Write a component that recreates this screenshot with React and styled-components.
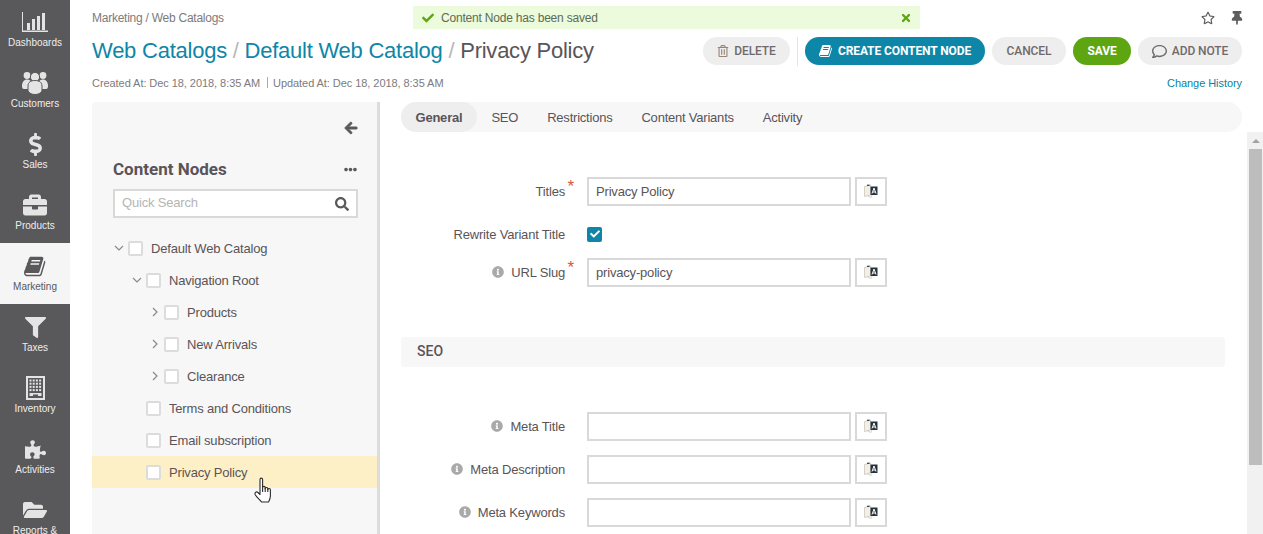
import React from "react";
import styled, { createGlobalStyle } from "styled-components";
import {
  FaDollarSign,
  FaBriefcase,
  FaFilter,
  FaPuzzlePiece,
  FaFolderOpen,
  FaCheck,
  FaTimes,
  FaRegStar,
  FaThumbtack,
  FaRegTrashAlt,
  FaRegComment,
  FaArrowLeft,
  FaEllipsisH,
  FaSearch,
  FaInfoCircle,
} from "react-icons/fa";

const GlobalStyle = createGlobalStyle`
  html, body {
    margin: 0;
    height: 534px;
    overflow: hidden;
    background: #fff;
  }
  body {
    font-family: "Liberation Sans", Arial, sans-serif;
    font-size: 13px;
    letter-spacing: -0.18px;
    color: #5a5458;
  }
  * { box-sizing: border-box; }
`;

const Page = styled.div`
  display: flex;
  height: 534px;
  width: 1263px;
  overflow: hidden;
`;

const Sidebar = styled.nav`
  width: 70px;
  flex: none;
  background: #59585a;
  overflow: hidden;
  padding-bottom: 1px;
`;

const NavList = styled.div`
  margin-top: -1px;
`;

const NavItem = styled.div`
  height: 61px;
  display: flex;
  flex-direction: column;
  align-items: center;
  padding-top: 11px;
  background: ${(p) => (p.$active ? "#f5f5f5" : "transparent")};
  color: ${(p) => (p.$active ? "#59585a" : "#eee")};
  font-size: 10px;
  letter-spacing: 0;
  line-height: 13px;
  white-space: nowrap;
  svg { display: block; }
`;

const NavIcon = styled.div`
  height: 24px;
  display: flex;
  align-items: center;
  justify-content: center;
  margin-bottom: 2px;
  color: ${(p) => (p.$active ? "#59585a" : "#e4e4e4")};
  font-size: ${(p) => p.$size || 22}px;
`;

const Main = styled.div`
  flex: 1;
  min-width: 0;
  padding: 0 21px 0 22px;
  position: relative;
`;

const TopRow = styled.div`
  height: 36px;
  display: flex;
  align-items: center;
  justify-content: space-between;
  font-size: 12px;
  letter-spacing: -0.25px;
  color: #7e7a7c;
`;

const Toast = styled.div`
  position: absolute;
  left: 343px;
  top: 6px;
  width: 507px;
  height: 23px;
  background: #ebfbdb;
  display: flex;
  align-items: center;
  padding: 0 8px 0 9px;
  color: #5f6a55;
  font-size: 12px;
  letter-spacing: -0.2px;
  gap: 7px;
`;

const ToastClose = styled.span`
  margin-left: auto;
  color: #5ea512;
  font-size: 12px;
  display: flex;
`;

const TopIcons = styled.div`
  display: flex;
  gap: 15px;
  align-items: center;
  font-size: 14px;
  color: #5f5c5e;
  margin-right: -2px;
`;

const TitleRow = styled.div`
  height: 30px;
  display: flex;
  align-items: center;
  justify-content: space-between;
`;

const Title = styled.h1`
  margin: 0;
  font-size: 22px;
  letter-spacing: -0.24px;
  font-weight: 400;
  color: #5a5458;
  white-space: nowrap;
`;

const TitleLink = styled.span`
  color: #0d86a8;
`;

const Slash = styled.span`
  color: #b8b8b8;
`;

const Actions = styled.div`
  display: flex;
  align-items: center;
  gap: 7px;
`;

const Btn = styled.button`
  height: 28px;
  width: ${(p) => p.$w}px;
  border: 0;
  border-radius: 14px;
  padding: 0;
  background: ${(p) => p.$bg || "#eee"};
  color: ${(p) => p.$color || "#6e6a6c"};
  font-family: Roboto, sans-serif;
  font-weight: ${(p) => p.$weight || 500};
  font-size: 12px;
  letter-spacing: -0.1px;
  display: flex;
  align-items: center;
  justify-content: center;
  gap: 5px;
  white-space: nowrap;
`;

const Divider = styled.div`
  width: 1px;
  height: 29px;
  background: #e4e4e4;
`;

const MetaRow = styled.div`
  height: 19px;
  margin-top: 7px;
  display: flex;
  align-items: center;
  justify-content: space-between;
  font-size: 11px;
  letter-spacing: -0.06px;
  color: #7e7a7c;
`;

const MetaSep = styled.span`
  display: inline-block;
  width: 1px;
  height: 11px;
  background: #aaa;
  margin: 0 5px 0 7px;
  vertical-align: -1px;
`;

const ChangeLink = styled.span`
  color: #0d7fa0;
`;

const Columns = styled.div`
  display: flex;
  margin-top: 10px;
`;

const TreePanel = styled.aside`
  width: 288px;
  height: 432px;
  flex: none;
  background: #f7f7f7;
  border-right: 3px solid #dcdcdc;
  border-radius: 4px 0 0 0;
`;

const Collapse = styled.div`
  height: 51px;
  display: flex;
  justify-content: flex-end;
  align-items: center;
  padding: 0 19px 0 0;
  font-size: 14px;
  color: #59585a;
  svg { stroke: currentColor; stroke-width: 30px; }
`;

const PanelHead = styled.div`
  margin-top: 5px;
  padding: 0 20px 0 21px;
  height: 22px;
  display: flex;
  align-items: center;
  justify-content: space-between;
`;

const PanelTitle = styled.h2`
  margin: 0;
  font-family: Roboto, sans-serif;
  font-size: 17px;
  letter-spacing: 0;
  font-weight: 700;
  color: #5a5458;
`;

const More = styled.span`
  display: flex;
  font-size: 13px;
  color: #59585a;
`;

const SearchBox = styled.div`
  margin: 9px 21px 0;
  height: 29px;
  width: 245px;
  border: 2px solid #d9d9d9;
  background: #fff;
  display: flex;
  align-items: center;
  justify-content: space-between;
  padding: 0 7px 2px 7px;
  color: #b5b5b5;
  svg { color: #59585a; font-size: 14px; margin-top: 2px; }
`;

const Tree = styled.div`
  margin-top: 14px;
`;

const TreeRow = styled.div`
  height: 32px;
  display: flex;
  align-items: center;
  padding-left: ${(p) => p.$indent}px;
  background: ${(p) => (p.$selected ? "#fef0c6" : "transparent")};
  color: #5a5458;
`;

const Caret = styled.span`
  width: 14px;
  flex: none;
  display: flex;
  svg { transform: rotate(${(p) => (p.$open ? 90 : 0)}deg); }
`;

const Check = styled.span`
  width: 15px;
  height: 15px;
  flex: none;
  border: 2px solid #dcdcdc;
  border-radius: 2px;
  background: #fff;
  margin-right: 8px;
`;

const Pointer = styled.span`
  position: absolute;
  left: 184px;
  top: 477px;
  display: flex;
`;

const Content = styled.section`
  flex: 1;
  min-width: 0;
  margin-left: 21px;
  position: relative;
`;

const Tabs = styled.div`
  height: 30px;
  display: flex;
  align-items: center;
  background: #f7f7f7;
  border-radius: 15px;
`;

const Tab = styled.div`
  height: 30px;
  display: flex;
  align-items: center;
  padding: 0 14.5px;
  border-radius: 15px;
  background: ${(p) => (p.$active ? "#eee" : "transparent")};
  font-weight: ${(p) => (p.$active ? 700 : 400)};
  letter-spacing: -0.22px;
  color: #5a5458;
`;

const FormBody = styled.div`
  width: 824px;
  padding-top: 44px;
`;

const Field = styled.div`
  display: flex;
  align-items: center;
  height: 30px;
  margin-bottom: ${(p) => p.$gap ?? 13}px;
`;

const Label = styled.label`
  width: 164px;
  flex: none;
  display: flex;
  align-items: center;
  justify-content: flex-end;
  gap: 7px;
  color: #5a5458;
  position: relative;
`;

const Info = styled.span`
  display: flex;
  font-size: 12px;
  color: #a9a9a9;
`;

const Required = styled.span`
  position: absolute;
  right: -9px;
  top: -6px;
  color: #d8583c;
  font-size: 17px;
  line-height: 17px;
`;

const Input = styled.div`
  margin-left: 22px;
  width: 264px;
  height: 29px;
  border: 2px solid #d9d9d9;
  background: #fff;
  padding: 0 7px;
  display: flex;
  align-items: center;
  color: #5a5458;
`;

const TranslateBtn = styled.div`
  margin-left: 4px;
  width: 32px;
  height: 29px;
  border: 2px solid #d9d9d9;
  background: #fff;
  display: flex;
  align-items: center;
  justify-content: center;
`;

const Tick = styled.span`
  margin-left: 22px;
  width: 15px;
  height: 15px;
  border-radius: 2px;
  background: #0d86a8;
  color: #fff;
  display: flex;
  align-items: center;
  justify-content: center;
  font-size: 10px;
`;

const SectionHead = styled.div`
  height: 30px;
  margin: 50px 0 44px;
  background: #f7f7f7;
  border-radius: 3px;
  display: flex;
  align-items: center;
  padding: 0 0 2px 16px;
  font-family: Roboto, sans-serif;
  font-weight: 500;
  font-size: 14px;
  letter-spacing: 0;
  color: #5a5458;
`;

const ScrollTrack = styled.div`
  position: absolute;
  right: -21px;
  top: 30px;
  width: 16px;
  height: 402px;
  background: #f1f1f1;
  display: flex;
  flex-direction: column;
  padding-left: 2px;
`;

const ScrollArrow = styled.div`
  height: 17px;
  width: 13px;
  display: flex;
  align-items: center;
  justify-content: center;
  &::before {
    content: "";
    border-left: 4px solid transparent;
    border-right: 4px solid transparent;
    border-bottom: 4px solid #a3a3a3;
  }
`;

const ScrollThumb = styled.div`
  width: 13px;
  height: 316px;
  background: #bdbdbd;
`;

const BOOK_PATH =
  "M1639 478q40 57 18 129l-275 906q-19 64-76.5 107.5t-122.5 43.5h-923q-77 0-148.5-53.5t-99.5-131.5q-24-67-2-127 0-4 3-27t4-37q1-8-3-21.5t-3-19.5q2-11 8-21t16.5-23.5 16.5-23.5q23-38 45-91.5t30-91.5q3-10 .5-30t-.5-28q3-11 17-28t17-23q21-36 42-92t25-90q1-9-2.5-32t.5-28q4-13 22-30.5t22-22.5q19-26 42.5-84.5t27.5-96.5q1-8-3-25.5t-2-26.5q2-8 9-18t18-23 17-21q8-12 16.5-30.5t15-35 16-36 19.5-32 26.5-23.5 36-11.5 47.5 5.5l-1 3q38-9 51-9h761q74 0 114 56t18 130l-274 906q-36 119-71.5 153.5t-128.5 34.5h-869q-27 0-38 15-11 16-1 43 24 70 144 70h923q29 0 56-15.5t35-41.5l300-987q7-22 5-57 38 15 59 43zm-1064 2q-4 13 2 22.5t20 9.5h608q13 0 25.5-9.5t16.5-22.5l21-64q4-13-2-22.5t-20-9.5h-608q-13 0-25.5 9.5t-16.5 22.5zm-83 256q-4 13 2 22.5t20 9.5h608q13 0 25.5-9.5t16.5-22.5l21-64q4-13-2-22.5t-20-9.5h-608q-13 0-25.5 9.5t-16.5 22.5z";

const BookIcon = ({ size }) => (
  <svg width={size} height={size} viewBox="0 0 1792 1792" fill="currentColor">
    <path d={BOOK_PATH} />
  </svg>
);

const DashboardsIcon = () => (
  <svg width="26" height="20" viewBox="0 0 26 20" fill="#e4e4e4">
    <path d="M0 0h1v18.6h25V20H0z" />
    <rect x="5" y="11" width="3" height="7" />
    <rect x="10" y="7" width="3" height="11" />
    <rect x="15" y="4" width="3" height="14" />
    <rect x="20" y="1" width="3" height="17" />
  </svg>
);

const UsersIcon = () => (
  <svg width="26" height="24" viewBox="0 0 26 24" fill="#e4e4e4">
    <circle cx="5" cy="4.5" r="3.4" />
    <circle cx="21" cy="4.5" r="3.4" />
    <path d="M0 15c0-4 2-6.500 5-6.500 3 0 5 2 5 6.500v3H2c-1.500 0-2-1-2-3z" />
    <path d="M26 15c0-4-2-6.500-5-6.500-3 0-5 2-5 6.500v3h8c1.500 0 2-1 2-3z" />
    <circle cx="13" cy="6" r="4.600" stroke="#59585a" strokeWidth="1" />
    <path
      d="M6 20v-5c0-3.500 2.500-5.500 7-5.500s7 2 7 5.500v5c-1.500 2.500-4 3.500-7 3.500s-5.500-1-7-3.500z"
      stroke="#59585a"
      strokeWidth="1"
    />
  </svg>
);

const BuildingIcon = () => {
  const windows = [];
  for (let row = 0; row < 4; row++) {
    for (let col = 0; col < 4; col++) {
      windows.push(<rect key={`${row}-${col}`} x={3.5 + col * 3.2} y={3.5 + row * 3.2} width="2" height="2" />);
    }
  }
  return (
    <svg width="19" height="24" viewBox="0 0 19 24" fill="#e4e4e4">
      <path fillRule="evenodd" d="M0 0h19v24H0zM2 2v20h15V2z" />
      {windows}
      <path d="M3.500 17h12v3h-3.500v-1.500h-5V20H3.500z" />
    </svg>
  );
};

const TranslateIcon = () => (
  <svg width="14" height="14" viewBox="0 0 14 14">
    <path d="M.5 2.500 6.500 1v10l-6 1.500z" fill="#f3efe6" stroke="#c4c0b6" strokeWidth="0.7" />
    <path d="M3.500 12l3.500 1.500 1-2.500" fill="none" stroke="#c4c0b6" strokeWidth="0.7" />
    <path d="M3 .8l2.500-.3v1.400H3z" fill="#3b4a55" />
    <path d="M6.500 2.500h7v8.500h-7z" fill="#26323c" />
    <path d="M8 9.500 10 4l2 5.500M8.800 8h2.400" fill="none" stroke="#fff" strokeWidth="1" />
  </svg>
);

const CaretIcon = () => (
  <svg width="10" height="10" viewBox="0 0 10 10" fill="none" stroke="#8a8a8a" strokeWidth="1.2">
    <path d="M3 1l4 4-4 4" />
  </svg>
);

const HandIcon = () => (
  <svg width="19" height="26" viewBox="0 0 19 26" fill="#fff" stroke="#2b2b2b" strokeWidth="1.1" strokeLinejoin="round">
    <path d="M6 15.500V2.500C6 .6 8.600 .6 8.600 2.500V10.500C8.600 9 11.200 9 11.200 10.500V11.500C11.200 10.200 13.800 10.200 13.800 11.700V12.500C13.800 11.200 16.400 11.200 16.400 12.800V19C16.400 21.500 15.500 23 14.500 25H7.500C6.500 23 3.500 21.200 1.400 18C.2 16 2.200 14 4 15.500L6 17.500Z" />
    <path d="M8.600 10.500V15M11.200 11V15M13.800 12V15" fill="none" />
  </svg>
);

const navItems = [
  { label: "Dashboards", icon: <DashboardsIcon /> },
  { label: "Customers", icon: <UsersIcon /> },
  { label: "Sales", icon: <FaDollarSign />, size: 23 },
  { label: "Products", icon: <FaBriefcase />, size: 24 },
  { label: "Marketing", icon: <BookIcon size={23} />, active: true },
  { label: "Taxes", icon: <FaFilter />, size: 21 },
  { label: "Inventory", icon: <BuildingIcon /> },
  { label: "Activities", icon: <FaPuzzlePiece />, size: 21 },
  { label: "Reports &", icon: <FaFolderOpen />, size: 24 },
];

const treeItems = [
  { label: "Default Web Catalog", indent: 22, caret: "open" },
  { label: "Navigation Root", indent: 40, caret: "open" },
  { label: "Products", indent: 58, caret: "closed" },
  { label: "New Arrivals", indent: 58, caret: "closed" },
  { label: "Clearance", indent: 58, caret: "closed" },
  { label: "Terms and Conditions", indent: 54 },
  { label: "Email subscription", indent: 54 },
  { label: "Privacy Policy", indent: 54, selected: true },
];

const tabs = ["General", "SEO", "Restrictions", "Content Variants", "Activity"];

const Translate = () => (
  <TranslateBtn>
    <TranslateIcon />
  </TranslateBtn>
);

export default function App() {
  return (
    <Page>
      <GlobalStyle />
      <Sidebar>
        <NavList>
          {navItems.map((item) => (
            <NavItem key={item.label} $active={item.active}>
              <NavIcon $size={item.size} $active={item.active}>{item.icon}</NavIcon>
              {item.label}
            </NavItem>
          ))}
        </NavList>
      </Sidebar>
      <Main>
        <TopRow>
          <span>Marketing / Web Catalogs</span>
          <TopIcons>
            <FaRegStar />
            <FaThumbtack />
          </TopIcons>
        </TopRow>
        <Toast>
          <FaCheck color="#5ea512" size={12} />
          Content Node has been saved
          <ToastClose><FaTimes /></ToastClose>
        </Toast>
        <TitleRow>
          <Title>
            <TitleLink>Web Catalogs</TitleLink> <Slash>/</Slash> <TitleLink>Default Web Catalog</TitleLink> <Slash>/</Slash> Privacy Policy
          </Title>
          <Actions>
            <Btn $w={87}><FaRegTrashAlt color="#9a8478" size={12} />DELETE</Btn>
            <Divider />
            <Btn $w={180} $bg="#0d86a8" $color="#fff" $weight={700}><BookIcon size={14} />CREATE CONTENT NODE</Btn>
            <Btn $w={74}>CANCEL</Btn>
            <Btn $w={58} $bg="#5ea512" $color="#fff" $weight={700}>SAVE</Btn>
            <Btn $w={104}><FaRegComment size={15} />ADD NOTE</Btn>
          </Actions>
        </TitleRow>
        <MetaRow>
          <span>Created At: Dec 18, 2018, 8:35 AM<MetaSep />Updated At: Dec 18, 2018, 8:35 AM</span>
          <ChangeLink>Change History</ChangeLink>
        </MetaRow>
        <Columns>
          <TreePanel>
            <Collapse><FaArrowLeft /></Collapse>
            <PanelHead>
              <PanelTitle>Content Nodes</PanelTitle>
              <More><FaEllipsisH /></More>
            </PanelHead>
            <SearchBox>Quick Search<FaSearch /></SearchBox>
            <Tree>
              {treeItems.map((node) => (
                <TreeRow key={node.label} $indent={node.indent} $selected={node.selected}>
                  {node.caret && (
                    <Caret $open={node.caret === "open"}><CaretIcon /></Caret>
                  )}
                  <Check />
                  {node.label}
                </TreeRow>
              ))}
            </Tree>
          </TreePanel>
          <Content>
            <Tabs>
              {tabs.map((t, i) => (
                <Tab key={t} $active={i === 0}>{t}</Tab>
              ))}
            </Tabs>
            <FormBody>
              <Field>
                <Label>Titles<Required>*</Required></Label>
                <Input>Privacy Policy</Input>
                <Translate />
              </Field>
              <Field $gap={8}>
                <Label>Rewrite Variant Title</Label>
                <Tick><FaCheck /></Tick>
              </Field>
              <Field $gap={0}>
                <Label><Info><FaInfoCircle /></Info>URL Slug<Required>*</Required></Label>
                <Input>privacy-policy</Input>
                <Translate />
              </Field>
              <SectionHead>SEO</SectionHead>
              <Field>
                <Label><Info><FaInfoCircle /></Info>Meta Title</Label>
                <Input />
                <Translate />
              </Field>
              <Field>
                <Label><Info><FaInfoCircle /></Info>Meta Description</Label>
                <Input />
                <Translate />
              </Field>
              <Field>
                <Label><Info><FaInfoCircle /></Info>Meta Keywords</Label>
                <Input />
                <Translate />
              </Field>
            </FormBody>
            <ScrollTrack>
              <ScrollArrow />
              <ScrollThumb />
            </ScrollTrack>
          </Content>
        </Columns>
        <Pointer><HandIcon /></Pointer>
      </Main>
    </Page>
  );
}
